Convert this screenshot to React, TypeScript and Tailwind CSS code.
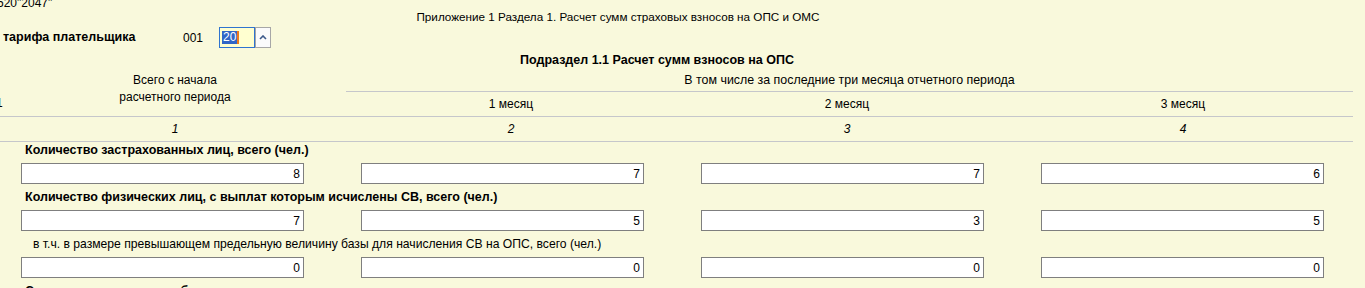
import React from "react";

const months = ["1 месяц", "2 месяц", "3 месяц"];

const rows = [
  { label: "Количество застрахованных лиц, всего (чел.)", bold: true, values: ["8", "7", "7", "6"] },
  { label: "Количество физических лиц, с выплат которым исчислены СВ, всего (чел.)", bold: true, values: ["7", "5", "3", "5"] },
  {
    label: "в т.ч. в размере превышающем предельную величину базы для начисления СВ на ОПС, всего (чел.)",
    bold: false,
    values: ["0", "0", "0", "0"],
  },
];

function NumField({ value }: { value: string }) {
  return (
    <div className="w-[283px] h-[21px] border border-[#7f7f7f] bg-white flex items-center justify-end pr-[3px] leading-none">
      {value}
    </div>
  );
}

export default function App() {
  return (
    <div className="w-[1365px] h-[288px] overflow-hidden bg-[#f9f9dc] text-black text-[12px] font-['Liberation_Sans',Arial,sans-serif]">
      {/* cut-off line above the form */}
      <div className="h-[8px] overflow-hidden">
        <div className="-mt-[4px] -ml-[3px] leading-[14px] whitespace-nowrap">620"2047"</div>
      </div>

      {/* title */}
      <div className="w-[1236px] h-[17px] leading-[17px] text-center text-[11.7px] whitespace-nowrap">
        Приложение 1 Раздела 1. Расчет сумм страховых взносов на ОПС и ОМС
      </div>

      {/* tariff code */}
      <div className="mt-[2px] h-[21px] flex items-center whitespace-nowrap">
        <span className="ml-[3px] w-[180px] font-bold text-[12.5px]">тарифа плательщика</span>
        <span className="w-[36px]">001</span>
        <div className="w-[36px] h-[21px] border border-[#2f74cf] bg-[#ffffd0] flex items-center pl-[2px]">
          <span className="bg-[#3166c6] text-white leading-[13px] px-[1px]">20</span>
          <span className="w-[2px] h-[13px] bg-[#f07a1a]" />
        </div>
        <div className="w-[16px] h-[21px] border border-[#a7a7a7] bg-[#fbfbfb] flex items-center justify-center">
          <svg width="8" height="5" viewBox="0 0 8 5">
            <path d="M1 4 L4 1 L7 4" fill="none" stroke="#3d5a8a" strokeWidth="1.6" />
          </svg>
        </div>
      </div>

      {/* subsection */}
      <div className="mt-[3px] w-[1314px] h-[18px] leading-[18px] text-center font-bold text-[12.5px] whitespace-nowrap">
        Подраздел 1.1 Расчет сумм взносов на ОПС
      </div>

      {/* table header */}
      <div className="w-[1353px] flex border-b border-[#c6c7cb]">
        <div className="w-[7px] overflow-hidden flex items-end pb-[6px]">
          <span className="-ml-[4px] leading-[14px]">1</span>
        </div>
        <div className="w-[336px] pt-[3px] leading-[17px] text-center">
          <div>Всего с начала</div>
          <div>расчетного периода</div>
        </div>
        <div className="flex-1 flex flex-col">
          <div className="ml-[3px] h-[23px] border-b border-[#c6c7cb] flex items-center justify-center text-[12.4px] whitespace-nowrap">
            В том числе за последние три месяца отчетного периода
          </div>
          <div className="h-[24px] flex items-center">
            {months.map((m) => (
              <div key={m} className="w-[336px] text-center">
                {m}
              </div>
            ))}
          </div>
        </div>
      </div>
      <div className="w-[1353px] h-[25px] flex items-center border-b border-[#c6c7cb] italic">
        <div className="w-[7px]" />
        {["1", "2", "3", "4"].map((n) => (
          <div key={n} className="w-[336px] text-center">
            {n}
          </div>
        ))}
      </div>

      {/* rows */}
      {rows.map((r) => (
        <div key={r.label} className="h-[47px]">
          <div
            className={`h-[16px] leading-[16px] whitespace-nowrap ${
              r.bold ? "ml-[25px] font-bold text-[12.5px]" : "ml-[33px] text-[12.15px]"
            }`}
          >
            {r.label}
          </div>
          <div className="mt-[5px] ml-[21px] flex gap-[57px]">
            {r.values.map((v, i) => (
              <NumField key={i} value={v} />
            ))}
          </div>
        </div>
      ))}
      <div className="h-[16px] leading-[16px] ml-[25px] font-bold text-[12.5px] whitespace-nowrap">
        Сумма, не подлежащая обложению страховыми взносами
      </div>
    </div>
  );
}
